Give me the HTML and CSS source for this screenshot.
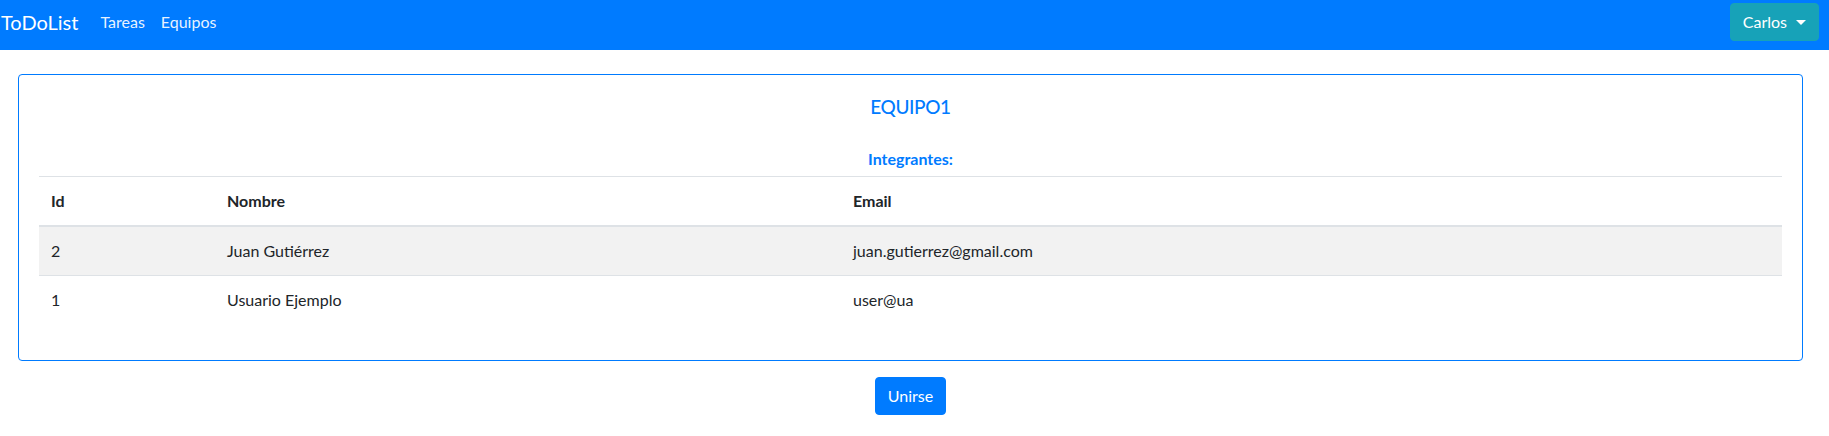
FILE: index.html
```html
<!DOCTYPE html>
<html lang="es">
<head>
<meta charset="utf-8">
<title>ToDoList</title>
<link rel="stylesheet" href="styles.css">
</head>
<body>
<nav class="navbar">
  <a class="brand" href="#">ToDoList</a>
  <a class="nav-link" href="#">Tareas</a>
  <a class="nav-link" href="#">Equipos</a>
  <button class="user-btn" type="button">Carlos<span class="caret"></span></button>
</nav>
<main class="content">
  <section class="card">
    <h5 class="team-title">EQUIPO1</h5>
    <h6 class="members-title">Integrantes:</h6>
    <table class="table">
      <thead>
        <tr><th class="col-id">Id</th><th class="col-name">Nombre</th><th>Email</th></tr>
      </thead>
      <tbody>
        <tr><td>2</td><td>Juan Gutiérrez</td><td>juan.gutierrez@gmail.com</td></tr>
        <tr><td>1</td><td>Usuario Ejemplo</td><td>user@ua</td></tr>
      </tbody>
    </table>
  </section>
  <div class="actions">
    <button class="join-btn" type="button">Unirse</button>
  </div>
</main>
</body>
</html>
```
FILE: styles.css
```css
* { box-sizing: border-box; }
html, body { margin: 0; }
body {
  font-family: "Lato", "Noto Sans", sans-serif;
  font-size: 16px;
  line-height: 1.5;
  color: #212529;
  background: #fff;
}
.navbar {
  display: flex;
  align-items: center;
  height: 50px;
  padding: 3px 10px 9px 1px;
  background: #007bff;
}
.brand {
  color: #fff;
  text-decoration: none;
  font-size: 20px;
  line-height: 30px;
  margin-right: 14px;
}
.nav-link {
  color: rgba(255,255,255,0.92);
  text-decoration: none;
  padding: 8px;
}
.user-btn {
  margin-left: auto;
  display: inline-flex;
  align-items: center;
  height: 38px;
  padding: 6px 12px;
  font: inherit;
  color: #fff;
  background: #17a2b8;
  border: 1px solid #17a2b8;
  border-radius: 4px;
}
.caret {
  display: inline-block;
  margin-left: 9px;
  width: 0;
  height: 0;
  border-top: 5px solid #fff;
  border-left: 5px solid transparent;
  border-right: 5px solid transparent;
}
.content { padding: 24px 26px 0 18px; }
.card {
  border: 1px solid #007bff;
  border-radius: 4px;
  padding: 20px;
}
.team-title {
  margin: 0 0 30px;
  text-align: center;
  color: #007bff;
  font-size: 19px;
  letter-spacing: -0.4px;
  font-weight: 500;
  line-height: 24px;
}
.members-title {
  margin: 0 0 8px;
  text-align: center;
  color: #007bff;
  font-size: 16px;
  font-weight: 700;
  line-height: 19px;
}
.table {
  width: 100%;
  border-collapse: collapse;
  margin-bottom: 16px;
}
.table th, .table td {
  padding: 12px;
  text-align: left;
  vertical-align: top;
  border-top: 1px solid #dee2e6;
}
.table th { font-weight: 700; border-bottom: 2px solid #dee2e6; }
.col-id { width: 176px; }
.col-name { width: 626px; }
.table tbody tr:nth-child(odd) { background: rgba(0,0,0,0.05); }
.actions {
  display: flex;
  justify-content: center;
  margin-top: 16px;
}
.join-btn {
  height: 38px;
  padding: 6px 12px;
  font: inherit;
  color: #fff;
  background: #007bff;
  border: 1px solid #007bff;
  border-radius: 4px;
}
```
